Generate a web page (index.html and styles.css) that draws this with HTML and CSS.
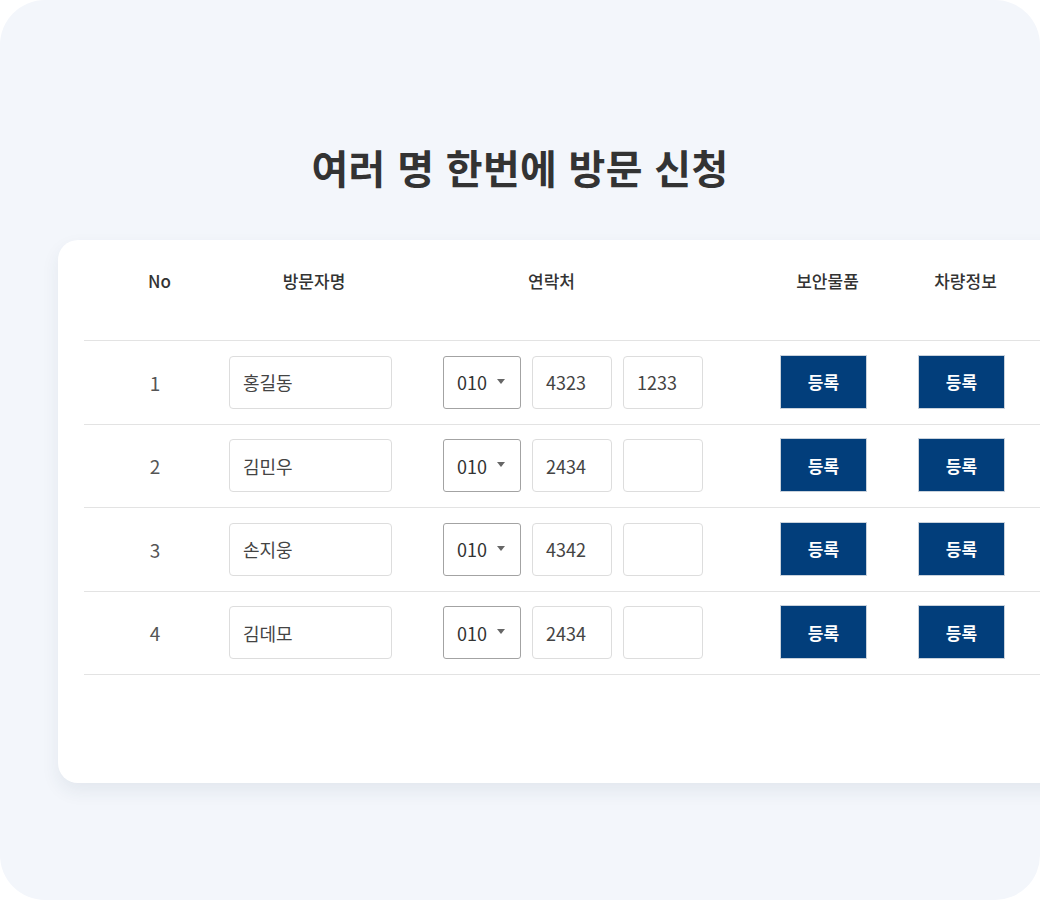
FILE: index.html
```html
<!DOCTYPE html>
<html lang="ko">
<head>
<meta charset="utf-8">
<title>여러 명 한번에 방문 신청</title>
<link rel="stylesheet" href="styles.css">
</head>
<body>
<div class="frame">
  <h1 class="title">여러 명 한번에 방문 신청</h1>
  <div class="card">
    <div class="table">
      <div class="row head">
        <div class="c-no">No</div>
        <div class="c-name"><span class="h-name">방문자명</span></div>
        <div class="c-tel"><span class="h-tel">연락처</span></div>
        <div class="c-sec"><span class="h-btn">보안물품</span></div>
        <div class="c-car"><span class="h-btn">차량정보</span></div>
      </div>
      <div class="row">
        <div class="c-no num">1</div>
        <div class="c-name"><div class="field name">홍길동</div></div>
        <div class="c-tel"><div class="select">010<span class="caret"></span></div><div class="field tel">4323</div><div class="field tel">1233</div></div>
        <div class="c-sec"><button class="btn">등록</button></div>
        <div class="c-car"><button class="btn">등록</button></div>
      </div>
      <div class="row">
        <div class="c-no num">2</div>
        <div class="c-name"><div class="field name">김민우</div></div>
        <div class="c-tel"><div class="select">010<span class="caret"></span></div><div class="field tel">2434</div><div class="field tel"></div></div>
        <div class="c-sec"><button class="btn">등록</button></div>
        <div class="c-car"><button class="btn">등록</button></div>
      </div>
      <div class="row">
        <div class="c-no num">3</div>
        <div class="c-name"><div class="field name">손지웅</div></div>
        <div class="c-tel"><div class="select">010<span class="caret"></span></div><div class="field tel">4342</div><div class="field tel"></div></div>
        <div class="c-sec"><button class="btn">등록</button></div>
        <div class="c-car"><button class="btn">등록</button></div>
      </div>
      <div class="row">
        <div class="c-no num">4</div>
        <div class="c-name"><div class="field name">김데모</div></div>
        <div class="c-tel"><div class="select">010<span class="caret"></span></div><div class="field tel">2434</div><div class="field tel"></div></div>
        <div class="c-sec"><button class="btn">등록</button></div>
        <div class="c-car"><button class="btn">등록</button></div>
      </div>
    </div>
  </div>
</div>
</body>
</html>
```
FILE: styles.css
```css
* { box-sizing: border-box; }
html, body { margin: 0; padding: 0; background: #ffffff; }
body {
  width: 1040px;
  height: 900px;
  font-family: "Noto Sans CJK KR", "Noto Sans", sans-serif;
  color: #333;
}
.frame {
  width: 1040px;
  height: 900px;
  border-radius: 45px;
  background: #f3f6fb;
  overflow: hidden;
  padding-top: 141px;
}
.title {
  margin: 0;
  height: 52px;
  line-height: 52px;
  text-align: center;
  font-size: 40px;
  font-weight: 700;
  letter-spacing: 0.3px;
  color: #333;
}
.card {
  margin-top: 47px;
  margin-left: 58px;
  width: 1040px;
  height: 543px;
  background: #fff;
  border-radius: 20px;
  box-shadow: 0 8px 18px rgba(40, 60, 90, 0.08);
  padding-left: 26px;
}
.row {
  display: grid;
  grid-template-columns: 145px 214px 337px 138px 140px;
  align-items: center;
  height: 83.5px;
  border-bottom: 1px solid #e3e3e3;
}
.row.head {
  height: 101px;
  align-items: start;
  padding-top: 28px;
  font-size: 17px;
  font-weight: 500;
  color: #333;
}
.c-no { text-align: center; }
.head .c-no { padding-left: 6px; }
.h-name { display: block; width: 170px; text-align: center; }
.h-tel { display: block; padding-left: 85px; }
.h-btn { display: block; width: 95px; text-align: center; }
.num { font-size: 19px; color: #555; padding-right: 3px; }
.c-tel { display: flex; gap: 11px; }
.field, .select {
  height: 53px;
  border: 1px solid #dddddd;
  border-radius: 4px;
  display: flex;
  align-items: center;
  padding-left: 13px;
  font-size: 18px;
  color: #444;
  background: #fff;
}
.name { width: 163px; }
.tel { width: 80px; }
.select {
  width: 78px;
  border-color: #a3a3a3;
  border-radius: 3px;
  padding-left: 13px;
  color: #333;
}
.caret {
  margin-left: 10px;
  width: 0;
  height: 0;
  border-left: 4.5px solid transparent;
  border-right: 4.5px solid transparent;
  border-top: 5px solid #666;
  margin-top: -2px;
}
.btn {
  width: 87px;
  height: 54px;
  border: 1px solid #c9d2dc;
  background: #023e7b;
  color: #fff;
  font-family: inherit;
  font-size: 17px;
  font-weight: 700;
  padding: 0;
  display: block;
  margin-top: -1px;
}
```
